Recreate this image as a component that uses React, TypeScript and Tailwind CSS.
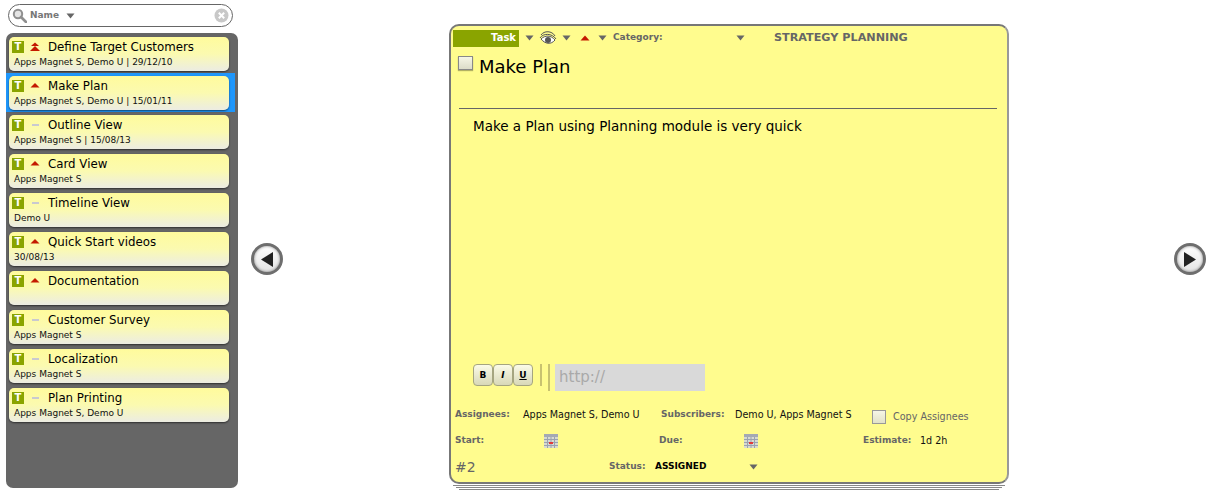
import React from "react";

const font = { fontFamily: '"DejaVu Sans", sans-serif' };

function Caret({ className = "" }: { className?: string }) {
  return (
    <svg width="9" height="6" viewBox="0 0 9 6" className={className}>
      <path d="M0.5 0.5H8.5L4.5 5.5Z" fill="#666666" />
    </svg>
  );
}

function Priority({ level }: { level: "high" | "top" | "none" }) {
  if (level === "none") return <div className="h-[2px] w-[7px] bg-[#c9c9d0] ml-[2px] mr-[9px]" />;
  return (
    <svg width="10" height="10" viewBox="0 0 10 10" className="mr-[8px]">
      {level === "top" ? (
        <>
          <path d="M5 0.5L9 4H1Z" fill="#c41a00" />
          <path d="M5 4L10 9H0Z" fill="#c41a00" />
        </>
      ) : (
        <path d="M5 2L9.5 6.5H0.5Z" fill="#c41a00" />
      )}
    </svg>
  );
}

function TaskCard({ title, sub, level, selected }: { title: string; sub: string; level: "high" | "top" | "none"; selected?: boolean }) {
  return (
    <div className={selected ? "h-[39px] bg-[#1f97fb] pt-[3px] pl-[3px] mr-[3px]" : "h-[39px] pt-[3px] pl-[3px]"}>
      <div className="w-[220px] h-[34px] rounded-[5px] bg-gradient-to-b from-[#fffb9c] via-[#fbfab0] to-[#ecece2] shadow-[0_1px_2px_rgba(0,0,0,0.55)] pl-[3px]">
        <div className="flex items-center h-[18px] pt-[2px]">
          <div className="w-[12px] h-[12px] bg-[#8aa400] text-white text-[10px] font-bold leading-[11px] text-center mr-[6px]">T</div>
          <Priority level={level} />
          <span className="text-[11.8px] leading-[16px] text-black">{title}</span>
        </div>
        <div className="text-[9px] leading-[14px] text-[#111] pl-[2px] whitespace-nowrap">{sub}</div>
      </div>
    </div>
  );
}

function Calendar() {
  return (
    <svg width="14" height="14" viewBox="0 0 14 14">
      <rect x="0" y="0" width="14" height="14" fill="#d8dad0" />
      <rect x="0" y="0" width="14" height="3" fill="#a4a9b4" />
      <g stroke="#9aa2b0" strokeWidth="1">
        <path d="M0 5.5H14M0 8.5H14M0 11.5H14M3.5 3V14M7 3V14M10.5 3V14" />
      </g>
      <rect x="5" y="8" width="4" height="2" fill="#e23a3a" />
    </svg>
  );
}

function Circle({ dir }: { dir: "l" | "r" }) {
  return (
    <div className="w-[32px] h-[32px] rounded-full border-[3px] border-[#6e6e6e] bg-gradient-to-b from-[#fff] to-[#e4e4e4] flex items-center justify-center shadow-[inset_0_0_3px_rgba(0,0,0,0.45)] shrink-0">
      <svg width="14" height="17" viewBox="0 0 14 17">
        {dir === "l" ? <path d="M1 8.5L13 1V16Z" fill="#222" /> : <path d="M13 8.5L1 1V16Z" fill="#222" />}
      </svg>
    </div>
  );
}

const items: { title: string; sub: string; level: "high" | "top" | "none"; selected?: boolean }[] = [
  { title: "Define Target Customers", sub: "Apps Magnet S, Demo U | 29/12/10", level: "top" },
  { title: "Make Plan", sub: "Apps Magnet S, Demo U | 15/01/11", level: "high", selected: true },
  { title: "Outline View", sub: "Apps Magnet S | 15/08/13", level: "none" },
  { title: "Card View", sub: "Apps Magnet S", level: "high" },
  { title: "Timeline View", sub: "Demo U", level: "none" },
  { title: "Quick Start videos", sub: "30/08/13", level: "high" },
  { title: "Documentation", sub: "", level: "high" },
  { title: "Customer Survey", sub: "Apps Magnet S", level: "none" },
  { title: "Localization", sub: "Apps Magnet S", level: "none" },
  { title: "Plan Printing", sub: "Apps Magnet S, Demo U", level: "none" },
];

export default function App() {
  return (
    <div className="flex w-[1212px] h-[491px] bg-white overflow-hidden" style={font}>
      <div className="w-[238px] pl-[6px] pt-[4px] shrink-0">
        <div className="ml-[2px] w-[225px] h-[23px] rounded-full border border-[#666] bg-white flex items-center pl-[3px] pr-[3px]">
          <svg width="15" height="15" viewBox="0 0 15 15" className="mr-[3px]">
            <circle cx="6" cy="6" r="4.2" fill="#e4e4e4" stroke="#8f8f8f" strokeWidth="2" />
            <path d="M9 9L14 14" stroke="#8f8f8f" strokeWidth="2.6" strokeLinecap="round" />
          </svg>
          <span className="text-[9px] font-bold text-[#777] mr-[7px]">Name</span>
          <Caret />
          <div className="flex-1" />
          <svg width="15" height="15" viewBox="0 0 15 15">
            <circle cx="7.5" cy="7.5" r="7" fill="#c8c8c8" />
            <path d="M4.8 4.8L10.2 10.2M10.2 4.8L4.8 10.2" stroke="#fff" strokeWidth="2" />
          </svg>
        </div>
        <div className="mt-[6px] w-[232px] h-[455px] bg-[#666] rounded-[7px] pt-[1px]">
          {items.map((it) => (
            <TaskCard key={it.title} {...it} />
          ))}
        </div>
      </div>

      <div className="ml-[13px] mt-[243px]">
        <Circle dir="l" />
      </div>

      <div className="ml-[166px] mt-[24px] w-[560px] shrink-0">
        <div className="h-[460px] rounded-[10px] border-2 border-[#777] border-r-[#999] bg-[#fffc8e] pt-[3px] pb-[2px] flex flex-col">
          <div className="flex items-center h-[18px] pl-[2px]">
            <div className="w-[66px] h-[17px] bg-[#8aa400] text-white text-[10px] font-bold text-right pr-[3px] leading-[16px]">Task</div>
            <Caret className="ml-[6px]" />
            <svg width="18" height="16" viewBox="0 0 18 16" className="ml-[5px]">
              <path d="M1 8C4 3 13 3 17 9" fill="none" stroke="#555" strokeWidth="1" />
              <path d="M2 5C5 0.5 13 0.5 16 6" fill="none" stroke="#555" strokeWidth="1" />
              <path d="M2 9C6 5 12 5 16 10C12 15 6 14 2 9Z" fill="#fff" stroke="#555" strokeWidth="1" />
              <circle cx="9" cy="10" r="3" fill="#555" />
            </svg>
            <Caret className="ml-[5px]" />
            <svg width="10" height="6" viewBox="0 0 10 6" className="ml-[9px]">
              <path d="M5 0.5L9.5 5.5H0.5Z" fill="#c41a00" />
            </svg>
            <Caret className="ml-[8px]" />
            <span className="ml-[6px] w-[123px] text-[9px] font-bold text-[#666]">Category:</span>
            <Caret />
            <span className="ml-[29px] text-[11.2px] font-bold text-[#666] mt-[1px]">STRATEGY PLANNING</span>
          </div>
          <div className="flex items-start pl-[7px] mt-[7px] h-[54px]">
            <div className="w-[15px] h-[14px] mt-[2px] border border-[#888] bg-gradient-to-b from-[#f6f6e6] to-[#dcdcc8] shadow-[0_1px_1px_rgba(0,0,0,0.3)]" />
            <span className="ml-[6px] text-[18px] leading-[26px] text-black">Make Plan</span>
          </div>
          <div className="ml-[8px] mr-[10px] h-px bg-[#666]" />
          <div className="pl-[22px] mt-[9px] text-[13.5px] leading-[16px] text-black">Make a Plan using Planning module is very quick</div>
          <div className="flex-1" />
          <div className="flex pl-[22px] h-[27px] items-start">
            {["B", "I", "U"].map((c) => (
              <div
                key={c}
                className={
                  "w-[20px] h-[22px] rounded-[4px] border border-[#a5a580] bg-gradient-to-b from-[#fbfbe8] to-[#d8d8b8] text-[9px] font-bold text-center leading-[20px] text-black" +
                  (c === "I" ? " italic" : c === "U" ? " underline" : "")
                }
              >
                {c}
              </div>
            ))}
            <div className="ml-[7px] w-[2px] h-[22px] bg-[#c8c270]" />
            <div className="ml-[6px] w-[2px] h-[27px] bg-[#c8c270]" />
            <div className="ml-[5px] w-[150px] h-[27px] bg-[#d9d9d9] text-[15px] leading-[27px] pl-[4px] text-[#a9a9a9]">http://</div>
          </div>
          <div className="flex items-center pl-[4px] h-[26px] mt-[11px] text-[9.6px] text-[#111]">
            <span className="w-[68px] text-[9px] font-bold text-[#666]">Assignees:</span>
            <span className="w-[138px] whitespace-nowrap">Apps Magnet S, Demo U</span>
            <span className="w-[74px] text-[9px] font-bold text-[#666]">Subscribers:</span>
            <span className="w-[137px] whitespace-nowrap">Demo U, Apps Magnet S</span>
            <div className="w-[14px] h-[14px] mt-[4px] border border-[#999] bg-gradient-to-b from-[#f6f6e6] to-[#e2e2c8]" />
            <span className="ml-[7px] mt-[4px] text-[#666]">Copy Assignees</span>
          </div>
          <div className="flex items-center pl-[4px] h-[26px] text-[9.6px] text-[#111]">
            <span className="w-[89px] text-[9px] font-bold text-[#666]">Start:</span>
            <Calendar />
            <span className="ml-[101px] w-[85px] text-[9px] font-bold text-[#666]">Due:</span>
            <Calendar />
            <span className="ml-[105px] w-[57px] text-[9px] font-bold text-[#666]">Estimate:</span>
            <span>1d 2h</span>
          </div>
          <div className="flex items-center pl-[4px] h-[26px] text-[9px] text-[#111]">
            <span className="w-[154px] text-[14px] text-[#666]">#2</span>
            <span className="w-[46px] font-bold text-[#666]">Status:</span>
            <span className="w-[94px] font-bold text-black">ASSIGNED</span>
            <Caret />
          </div>
        </div>
        <div className="mx-[4px] mt-[1px] h-px bg-[#888]" />
        <div className="mx-[7px] mt-[1px] h-px bg-[#888]" />
        <div className="mx-[10px] mt-[1px] h-px bg-[#888]" />
      </div>

      <div className="ml-[165px] mt-[243px]">
        <Circle dir="r" />
      </div>
    </div>
  );
}
